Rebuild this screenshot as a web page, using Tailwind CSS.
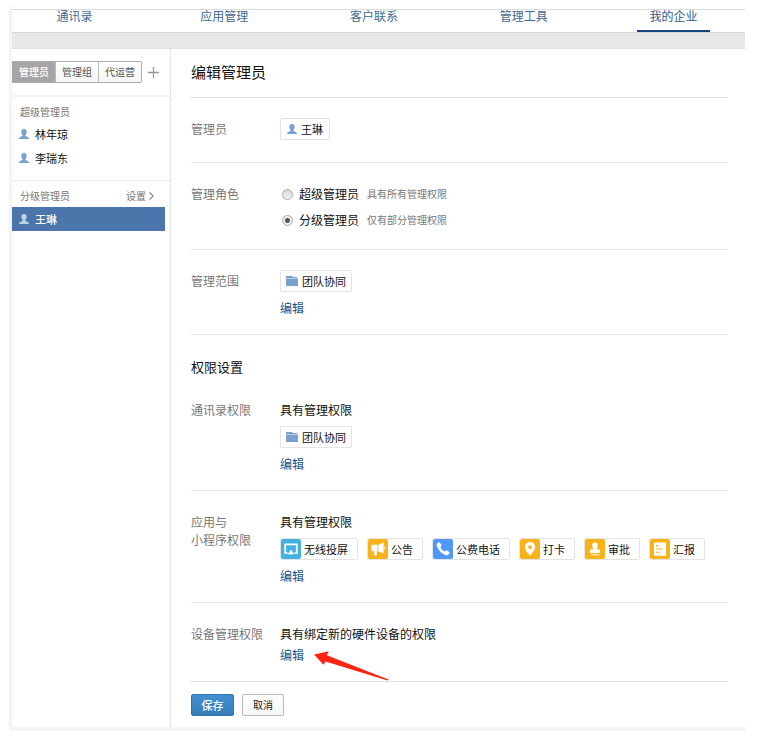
<!DOCTYPE html>
<html lang="zh-CN">

<head>
    <meta charset="UTF-8">
    <title>编辑管理员</title>
    <meta name="viewport" content="width=device-width, initial-scale=1.0">
    <script src="https://cdn.jsdelivr.net/npm/@tailwindcss/browser@4"></script>
</head>

<body class="bg-white font-['Noto_Sans_CJK_SC',sans-serif] text-xs text-[#111]">
    <!-- Shared icons -->
    <svg class="hidden" aria-hidden="true">
        <symbol id="icon-user" viewBox="0 0 10 10">
            <path fill="currentColor" d="M5 0C3.300 0 2.300 1.100 2.300 2.700c0 1.300.5 2.400 1.200 3 .2.700-.1 1.200-.8 1.500C1.200 7.800.1 8.200 0 10h10C9.900 8.200 8.800 7.800 7.300 7.200c-.7-.3-1-.8-.8-1.500.7-.6 1.200-1.700 1.200-3C7.700 1.100 6.700 0 5 0z" />
        </symbol>
        <symbol id="icon-folder" viewBox="0 0 12 10">
            <path fill="currentColor" d="M0 0h6l1 1h4v1H0zM0 2.500h12V10H0z" />
        </symbol>
    </svg>

    <div class="mt-[7px] mr-5 ml-[9px] pt-0.5 border-l-[3px] border-b-4 border-[#f4f4f4]">
        <!-- Top navigation -->
        <nav class="flex justify-between pl-[26px] pr-[35px] border-t border-[#dadcde] text-center leading-3 text-[#44688f]">
            <a href="#" class="w-[73px] pb-2">通讯录</a>
            <a href="#" class="w-[73px] pb-2">应用管理</a>
            <a href="#" class="w-[73px] pb-2">客户联系</a>
            <a href="#" class="w-[73px] pb-2">管理工具</a>
            <a href="#" class="w-[73px] pb-2 border-b-2 border-[#17457c] text-[#2f5a8c]">我的企业</a>
        </nav>
        <div class="h-[17px] bg-[#e7e8ea] border-t border-b border-t-[#d6d8da] border-b-[#dfe0e1]"></div>

        <div class="flex">
            <!-- Sidebar -->
            <aside class="w-[159px] shrink-0 border-r border-dotted border-[#d4d4d4] text-[10px] text-[#777]">
                <div class="flex items-center py-3 border-b-2 border-[#f2f2f2]">
                    <div class="flex w-[130px] h-[22px] border border-[#aaa] rounded-r-xs text-[#555]">
                        <button type="button" class="flex-1 bg-[#a6a6a6] font-medium text-white">管理员</button>
                        <button type="button" class="flex-1 border-l border-[#bbb] bg-linear-to-b from-white to-[#f6f6f6]">管理组</button>
                        <button type="button" class="flex-1 border-l border-[#bbb] bg-linear-to-b from-white to-[#f6f6f6]">代运营</button>
                    </div>
                    <button type="button" aria-label="添加" class="ml-1.5">
                        <svg class="size-[11px]" viewBox="0 0 11 11" stroke="#999" stroke-width="1.300"><path d="M5.500 0v11M0 5.500h11" /></svg>
                    </button>
                </div>
                <section class="pt-[7px] pb-2.5 border-b border-[#e9e9e9]">
                    <h2 class="px-2 leading-4">超级管理员</h2>
                    <ul class="mt-0.5 text-[11px] leading-6 text-[#111]">
                        <li><a href="#" class="flex items-center gap-1.5 px-[7px]"><svg class="size-2.5 text-[#78a0d2]"><use href="#icon-user" /></svg>林年琼</a></li>
                        <li><a href="#" class="flex items-center gap-1.5 px-[7px]"><svg class="size-2.5 text-[#78a0d2]"><use href="#icon-user" /></svg>李瑞东</a></li>
                    </ul>
                </section>
                <section class="pt-[7px]">
                    <div class="flex justify-between px-2 leading-4">
                        <h2>分级管理员</h2>
                        <a href="#" class="flex items-center gap-[3px] mr-2">设置
                            <svg class="w-[5px] h-2" viewBox="0 0 5 8" fill="none" stroke="#888" stroke-width="1.100"><path d="M.5.5 4.200 4 .5 7.500" /></svg>
                        </a>
                    </div>
                    <ul class="mt-[3px] mr-[5px] text-[11px] leading-6 font-medium text-white">
                        <li><a href="#" class="flex items-center gap-1.5 px-[7px] bg-[#4a76ab]"><svg class="size-2.5 text-[#bdd0e6]"><use href="#icon-user" /></svg>王琳</a></li>
                    </ul>
                </section>
            </aside>

            <!-- Edit form -->
            <form class="flex-1 pl-5 pr-[17px]">
                <h1 class="pt-[11px] pb-[13px] border-b border-[#e0e0e0] text-[15px] leading-6">编辑管理员</h1>

                <div class="flex pt-5 pb-[22px] border-b border-[#e4e4e4] leading-[22px]">
                    <div class="w-[89px] shrink-0 text-[#777]">管理员</div>
                    <div class="flex items-center gap-1 h-[22px] px-1.5 border border-[#e0e2e8] rounded-xs text-[11px]">
                        <svg class="size-2.5 text-[#78a0d2]"><use href="#icon-user" /></svg>王琳
                    </div>
                </div>

                <div class="flex pt-[18px] pb-4 border-b border-[#e4e4e4] leading-[26px]">
                    <div class="w-[89px] shrink-0 text-[#777]">管理角色</div>
                    <div>
                        <label class="flex items-center">
                            <input type="radio" name="role" class="appearance-none size-[11px] ml-0.5 mr-1.5 border border-[#aaa] rounded-full bg-linear-to-b from-[#d8d8d8] to-[#f2f2f2]">
                            超级管理员<span class="ml-2 text-[10px] text-[#777]">具有所有管理权限</span>
                        </label>
                        <label class="flex items-center">
                            <input type="radio" name="role" checked class="appearance-none size-[11px] ml-0.5 mr-1.5 border border-[#aaa] rounded-full bg-[radial-gradient(circle,#555_2px,#eee_3px)]">
                            分级管理员<span class="ml-2 text-[10px] text-[#777]">仅有部分管理权限</span>
                        </label>
                    </div>
                </div>

                <div class="flex pt-5 pb-[17px] border-b border-[#e4e4e4]">
                    <div class="w-[89px] shrink-0 leading-[22px] text-[#777]">管理范围</div>
                    <div class="flex flex-col items-start gap-[7px]">
                        <div class="flex items-center gap-1 h-[22px] px-[5px] border border-[#e4e4e8] rounded-xs text-[11px]">
                            <svg class="w-3 h-2.5 text-[#7ba0d0]"><use href="#icon-folder" /></svg>团队协同
                        </div>
                        <a href="#" class="leading-[18px] text-[#1d5487]">编辑</a>
                    </div>
                </div>

                <h2 class="pt-[22px] pb-0.5 text-[13px] leading-5">权限设置</h2>

                <div class="flex pt-[22px] pb-[17px] border-b border-[#e4e4e4] leading-[18px]">
                    <div class="w-[89px] shrink-0 text-[#777]">通讯录权限</div>
                    <div class="flex flex-col items-start gap-[7px]">
                        <p>具有管理权限</p>
                        <div class="flex items-center gap-1 h-[22px] px-[5px] border border-[#e4e4e8] rounded-xs text-[11px]">
                            <svg class="w-3 h-2.5 text-[#7ba0d0]"><use href="#icon-folder" /></svg>团队协同
                        </div>
                        <a href="#" class="text-[#1d5487]">编辑</a>
                    </div>
                </div>

                <div class="flex pt-[22px] pb-[17px] border-b border-[#e4e4e4] leading-[18px]">
                    <div class="w-[89px] shrink-0 text-[#777]">应用与<br>小程序权限</div>
                    <div class="flex flex-col items-start gap-[7px]">
                        <p>具有管理权限</p>
                        <ul class="flex flex-wrap gap-[9px] text-[11px]">
                            <li class="flex items-center gap-[3px] h-[22px] pr-[9px] border border-[#e4e4e4] rounded-xs">
                                <svg class="size-5 rounded-xs bg-[#44b2e0]" viewBox="0 0 20 20" fill="none" stroke="#fff" stroke-width="1.800" stroke-linejoin="round"><path d="M6.500 14.200H4.200V5.400h11.600v8.800H13.500" /><path d="M10 11.300l2.600 3.600H7.400z" fill="#fff" stroke-width="1" /></svg>无线投屏
                            </li>
                            <li class="flex items-center gap-[3px] h-[22px] pr-[9px] border border-[#e4e4e4] rounded-xs">
                                <svg class="size-5 rounded-xs bg-[#f8b31b]" viewBox="0 0 20 20" fill="#fff"><path d="M3.300 7.200c0-.9.500-1.500 1.400-1.500H9.500v6.600H8.800v3.200c0 .6-.3.900-.9.900H7c-.6 0-.9-.3-.9-.9v-3.200H4.700c-.9 0-1.400-.6-1.400-1.500zM10.300 5.700 15.600 3.600v10.800l-5.300-2.100zM16.300 7.300c1.300.5 1.300 2.900 0 3.400z" /></svg>公告
                            </li>
                            <li class="flex items-center gap-[3px] h-[22px] pr-[9px] border border-[#e4e4e4] rounded-xs">
                                <svg class="size-5 rounded-xs bg-[#4f98fa]" viewBox="0 0 20 20" fill="#fff"><path d="M4.200 4.600l1.300-1c.5-.4 1-.3 1.400.2l1.400 2c.4.500.3 1-.1 1.400l-.9.900c.8 1.900 2.400 3.500 4.400 4.500l1-.9c.4-.4.9-.4 1.400-.1l2 1.400c.5.400.6.9.2 1.400l-.9 1.200c-.6.700-1.500.9-2.400.6-4.300-1.400-7.700-4.800-9.200-9.100-.3-1-.3-1.900.4-2.500z" /></svg>公费电话
                            </li>
                            <li class="flex items-center gap-[3px] h-[22px] pr-[9px] border border-[#e4e4e4] rounded-xs">
                                <svg class="size-5 rounded-xs bg-[#f8b31b]" viewBox="0 0 20 20" fill="#fff"><path fill-rule="evenodd" d="M10 3C7 3 4.900 5.200 4.900 8c0 3.200 3 5.600 5.100 9 2.100-3.400 5.100-5.800 5.100-9C15.100 5.200 13 3 10 3zm0 3.200a1.900 1.900 0 1 1 0 3.800 1.900 1.900 0 0 1 0-3.800z" /></svg>打卡
                            </li>
                            <li class="flex items-center gap-[3px] h-[22px] pr-[9px] border border-[#e4e4e4] rounded-xs">
                                <svg class="size-5 rounded-xs bg-[#f8b31b]" viewBox="0 0 20 20" fill="#fff"><path d="M10 3.500c-1.700 0-2.900 1.200-2.900 2.700 0 1.400.9 2 .9 4.300H5.800c-.6 0-.9.400-.9.900V14h10.200v-2.600c0-.5-.3-.9-.9-.9H12c0-2.300.9-2.900.9-4.300 0-1.500-1.200-2.700-2.900-2.700zM6 15.300h8v1H6z" /></svg>审批
                            </li>
                            <li class="flex items-center gap-[3px] h-[22px] pr-[9px] border border-[#e4e4e4] rounded-xs">
                                <svg class="size-5 rounded-xs bg-[#f8b31b]" viewBox="0 0 20 20"><path fill="#fff" d="M4 3.500h12v13.200H4z" /><path fill="#f8b31b" d="M6 6.100h2v1.500H6zM6 9.400h6.500v1H6zM6 12.800h4v1H6z" /></svg>汇报
                            </li>
                        </ul>
                        <a href="#" class="text-[#1d5487]">编辑</a>
                    </div>
                </div>

                <div class="flex pt-[22px] pb-[17px] border-b border-[#e0e0e0] leading-[18px]">
                    <div class="w-[89px] shrink-0 text-[#777]">设备管理权限</div>
                    <div class="flex flex-col items-start gap-[3px]">
                        <p>具有绑定新的硬件设备的权限</p>
                        <div class="relative">
                            <a href="#" class="text-[#1d5487]">编辑</a>
                            <!-- Pointer to the edit link -->
                            <svg class="absolute left-[34px] top-1 w-[75px] h-[31px]" viewBox="0 0 75 31" aria-hidden="true"><path fill="#fd2412" d="M0 4.500 14.800 1.200 12.800 5.300 74.500 29.500 73.500 30.500 11.500 11.500 9.500 14.800z" /></svg>
                        </div>
                    </div>
                </div>

                <div class="flex gap-2 pt-3 pb-[11px] text-[11px]">
                    <button type="submit" class="w-[43px] h-[22px] border border-[#2f74b5] rounded-xs bg-linear-to-b from-[#4290d4] to-[#367cb6] font-medium text-white">保存</button>
                    <button type="button" class="w-[42px] h-[22px] border border-[#bbb] rounded-xs bg-linear-to-b from-white to-[#f6f6f6] text-[10px] text-[#222]">取消</button>
                </div>
            </form>
        </div>
    </div>
</body>

</html>
